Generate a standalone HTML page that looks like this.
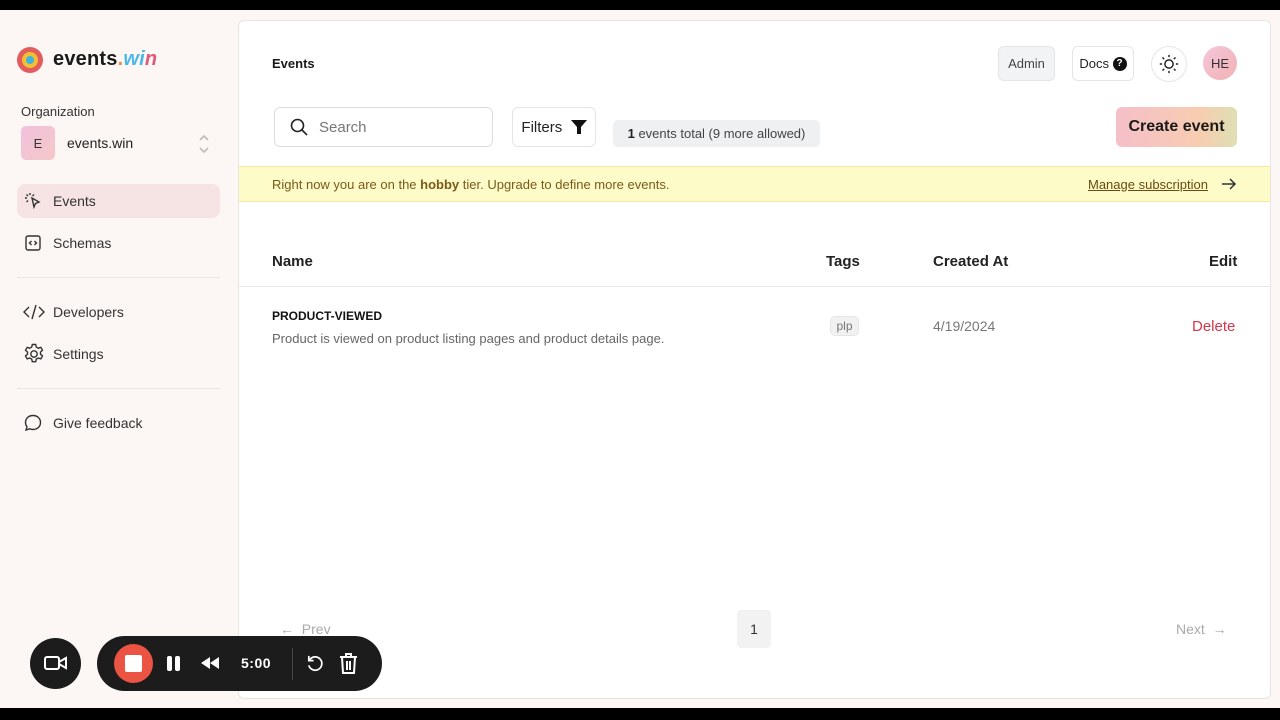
<!DOCTYPE html>
<html><head><meta charset="utf-8"><style>
*{box-sizing:border-box;margin:0;padding:0}
body{width:1280px;height:720px;overflow:hidden;background:#000;font-family:"Liberation Sans",sans-serif;color:#1a1a1a;position:relative}
.bg{position:absolute;left:0;top:10px;width:1280px;height:698px;background:#fcf6f4}
.card{position:absolute;left:238px;top:20px;width:1033px;height:679px;background:#fff;border:1px solid #e8e4e2;border-radius:6px;overflow:hidden}
.a{position:absolute}
.nav{position:absolute;left:17px;width:203px;height:34px;display:flex;align-items:center;font-size:14px;color:#333}
.nav svg{position:absolute;left:6px}
.nav span{position:absolute;left:36px}
.btn{position:absolute;border:1px solid #e5e5e5;border-radius:6px;display:flex;align-items:center;justify-content:center;font-size:13px}
</style></head><body>
<div class="bg"></div>
<div class="a" style="left:17px;top:47px;width:26px;height:26px;border-radius:50%;background:#e35d5d"></div>
<div class="a" style="left:22px;top:52px;width:16px;height:16px;border-radius:50%;background:#f2c033"></div>
<div class="a" style="left:26px;top:56px;width:8px;height:8px;border-radius:50%;background:#3fb4e0"></div>
<div class="a" style="left:53px;top:48px;font-size:20px;font-weight:bold;letter-spacing:0.2px">events<span style="color:#ee8a4a">.</span><span style="font-style:italic;color:#4cb8e8">wi</span><span style="font-style:italic;color:#e05a78">n</span></div>
<div class="a" style="left:21px;top:104px;font-size:13px;color:#333">Organization</div>
<div class="a" style="left:21px;top:126px;width:34px;height:34px;border-radius:5px;background:linear-gradient(135deg,#f0c0dc,#f6c8c8);font-size:13px;display:flex;align-items:center;justify-content:center;color:#333">E</div>
<div class="a" style="left:67px;top:135px;font-size:14px;color:#222">events.win</div>
<svg class="a" style="left:198px;top:134px" width="12" height="20" viewBox="0 0 12 20" fill="none" stroke="#bbb" stroke-width="1.6"><path d="M2 6l4-4 4 4M2 14l4 4 4-4"/></svg>
<div class="nav" style="top:184px;background:#f6e4e4;border-radius:8px"><svg width="20" height="20" viewBox="0 0 20 20" fill="none" stroke="#333" stroke-width="1.4"><path d="M9 7l2 9 1.5-3.5 3.5 -1.5z"/><path d="M7 2v2M2 7h2M3.5 3.5l1.5 1.5M11 3.5l-1.5 1.5M3.5 11l1.5-1.5"/></svg><span>Events</span></div>
<div class="nav" style="top:226px"><svg width="20" height="20" viewBox="0 0 20 20" fill="none" stroke="#333" stroke-width="1.4"><rect x="3" y="3" width="14" height="14" rx="2"/><path d="M8.5 8l-2 2 2 2M11.5 8l2 2-2 2"/></svg><span>Schemas</span></div>
<div class="a" style="left:17px;top:277px;width:203px;height:1px;background:#ebe4e2"></div>
<div class="nav" style="top:295px"><svg width="22" height="20" viewBox="0 0 22 20" fill="none" stroke="#333" stroke-width="1.4"><path d="M6 5l-5 5 5 5M16 5l5 5-5 5M13 3l-4 14"/></svg><span>Developers</span></div>
<div class="nav" style="top:337px"><svg width="24" height="24" viewBox="0 0 24 24" fill="none" stroke="#333" stroke-width="1.4" style="left:5px"><circle cx="12" cy="12" r="3.2"/><path d="M10.3 2.5h3.4l.6 2.6 2 1.1 2.5-.9 1.7 2.9-2 1.8v2.2l2 1.8-1.7 2.9-2.5-.9-2 1.1-.6 2.6h-3.4l-.6-2.6-2-1.1-2.5.9-1.7-2.9 2-1.8v-2.2l-2-1.8 1.7-2.9 2.5.9 2-1.1z"/></svg><span>Settings</span></div>
<div class="a" style="left:17px;top:388px;width:203px;height:1px;background:#ebe4e2"></div>
<div class="nav" style="top:406px"><svg width="20" height="20" viewBox="0 0 20 20" fill="none" stroke="#333" stroke-width="1.4"><path d="M10 2.5c4.4 0 7.5 3 7.5 7s-3.1 7-7.5 7c-1.2 0-2.3-.2-3.3-.7L3 17l1-3.3C3 12.5 2.5 11.1 2.5 9.5c0-4 3.1-7 7.5-7z"/></svg><span>Give feedback</span></div>

<div class="card">
 <div class="a" style="left:33px;top:35px;font-size:13px;font-weight:bold">Events</div>
 <div class="btn" style="left:759px;top:25px;width:57px;height:35px;background:#f2f3f5;color:#444">Admin</div>
 <div class="btn" style="left:833px;top:25px;width:62px;height:35px;color:#222">Docs&nbsp;<span style="display:inline-block;width:14px;height:14px;border-radius:50%;background:#111;color:#fff;font-size:10px;font-weight:bold;text-align:center;line-height:14px">?</span></div>
 <div class="btn" style="left:912px;top:25px;width:36px;height:36px;border-radius:50%"><svg width="22" height="22" viewBox="0 0 24 24" fill="none" stroke="#222" stroke-width="1.6"><circle cx="12" cy="12" r="4.5"/><path d="M12 2v2.5M12 19.5V22M2 12h2.5M19.5 12H22M4.9 4.9l1.8 1.8M17.3 17.3l1.8 1.8M4.9 19.1l1.8-1.8M17.3 6.7l1.8-1.8"/></svg></div>
 <div class="a" style="left:964px;top:25px;width:34px;height:34px;border-radius:50%;background:linear-gradient(135deg,#f4c6da,#f2b2b4);font-size:13px;display:flex;align-items:center;justify-content:center;color:#333">HE</div>
 <div class="btn" style="left:35px;top:86px;width:219px;height:40px;border-color:#ddd;justify-content:flex-start;padding-left:14px;font-size:15px;color:#777"><svg width="20" height="20" viewBox="0 0 20 20" fill="none" stroke="#222" stroke-width="1.6"><circle cx="8.5" cy="8.5" r="6"/><path d="M13 13l5 5"/></svg><span style="margin-left:10px">Search</span></div>
 <div class="btn" style="left:273px;top:86px;width:84px;height:40px;font-size:15px;color:#222">Filters&nbsp;&nbsp;<svg width="16" height="14" viewBox="0 0 16 14"><path d="M0 0h16L10 7v7H6V7z" fill="#111"/></svg></div>
 <div class="a" style="left:374px;top:99px;width:207px;height:27px;border-radius:5px;background:#eff0f2;font-size:13px;color:#444;display:flex;align-items:center;justify-content:center"><b style="color:#222">1</b>&nbsp;events total (9 more allowed)</div>
 <div class="a" style="left:877px;top:86px;width:121px;height:40px;border-radius:6px;background:linear-gradient(90deg,#f6bfc9,#f7cdb0 70%,#dde0b2);font-size:16px;font-weight:bold;display:flex;align-items:center;justify-content:center;color:#1a1a1a">Create event</div>
 <div class="a" style="left:0;top:145px;width:1033px;height:36px;background:#fdfbc8;border-top:1px solid #f0eba0;border-bottom:1px solid #f0eba0"></div>
 <div class="a" style="left:33px;top:156px;font-size:13px;color:#7a5a1a">Right now you are on the <b>hobby</b> tier. Upgrade to define more events.</div>
 <div class="a" style="left:849px;top:156px;font-size:13px;color:#6a4a12;text-decoration:underline">Manage subscription</div>
 <svg class="a" style="left:982px;top:156px" width="16" height="14" viewBox="0 0 16 14" fill="none" stroke="#333" stroke-width="1.5"><path d="M1 7h13M9 2l5 5-5 5"/></svg>
 <div class="a" style="left:33px;top:232px;font-size:15px;font-weight:bold;color:#222">Name</div>
 <div class="a" style="left:587px;top:232px;font-size:15px;font-weight:bold;color:#222">Tags</div>
 <div class="a" style="left:694px;top:232px;font-size:15px;font-weight:bold;color:#222">Created At</div>
 <div class="a" style="left:970px;top:232px;font-size:15px;font-weight:bold;color:#222">Edit</div>
 <div class="a" style="left:0;top:265px;width:1033px;height:1px;background:#e8e8e8"></div>
 <div class="a" style="left:33px;top:288px;font-size:12px;font-weight:bold;color:#111">PRODUCT-VIEWED</div>
 <div class="a" style="left:33px;top:310px;font-size:13px;color:#666">Product is viewed on product listing pages and product details page.</div>
 <div class="a" style="left:591px;top:295px;width:29px;height:20px;border-radius:5px;background:#f1f1f1;border:1px solid #e6e6e6;font-size:12px;color:#777;display:flex;align-items:center;justify-content:center">plp</div>
 <div class="a" style="left:694px;top:297px;font-size:14px;color:#777">4/19/2024</div>
 <div class="a" style="left:953px;top:297px;font-size:15px;color:#d4364a">Delete</div>
 <div class="a" style="left:41px;top:600px;font-size:14px;color:#aaa">&larr;&nbsp;&nbsp;Prev</div>
 <div class="a" style="left:498px;top:589px;width:34px;height:38px;border-radius:4px;background:#f2f2f2;font-size:14px;display:flex;align-items:center;justify-content:center;color:#333">1</div>
 <div class="a" style="left:937px;top:600px;font-size:14px;color:#aaa">Next&nbsp;&nbsp;&rarr;</div>
</div>
<div class="a" style="left:30px;top:638px;width:51px;height:51px;border-radius:50%;background:#1c1c1c"><svg style="position:absolute;left:14px;top:17px" width="24" height="16" viewBox="0 0 24 16" fill="none" stroke="#fff" stroke-width="2"><rect x="1" y="2" width="14" height="12" rx="2"/><path d="M15 7l7-4v10l-7-4"/></svg></div>
<div class="a" style="left:97px;top:636px;width:285px;height:55px;border-radius:28px;background:#1c1c1c"></div>
<div class="a" style="left:114px;top:644px;width:39px;height:39px;border-radius:50%;background:#eb5443"></div>
<div class="a" style="left:125px;top:655px;width:17px;height:17px;border-radius:2px;background:#fff"></div>
<div class="a" style="left:167px;top:656px;width:5px;height:15px;border-radius:2px;background:#fff"></div>
<div class="a" style="left:175px;top:656px;width:5px;height:15px;border-radius:2px;background:#fff"></div>
<svg class="a" style="left:201px;top:656px" width="20" height="14" viewBox="0 0 20 14"><path d="M0 7l9-6v12zM9 7l9-6v12z" fill="#fff"/></svg>
<div class="a" style="left:241px;top:655px;font-size:14px;font-weight:bold;color:#fff;letter-spacing:0.5px">5:00</div>
<div class="a" style="left:292px;top:648px;width:1px;height:32px;background:#444"></div>
<svg class="a" style="left:305px;top:654px" width="19" height="19" viewBox="0 0 20 20" fill="none" stroke="#fff" stroke-width="1.8"><path d="M5 6a7 7 0 1 1-1 6"/><path d="M4 2v5h5"/></svg>
<svg class="a" style="left:339px;top:653px" width="19" height="21" viewBox="0 0 19 21" fill="none" stroke="#fff" stroke-width="2"><path d="M1 4h17M7 4V1h5v3M3 4l1 16h11l1-16M8 8v9M11 8v9"/></svg>
</body></html>
